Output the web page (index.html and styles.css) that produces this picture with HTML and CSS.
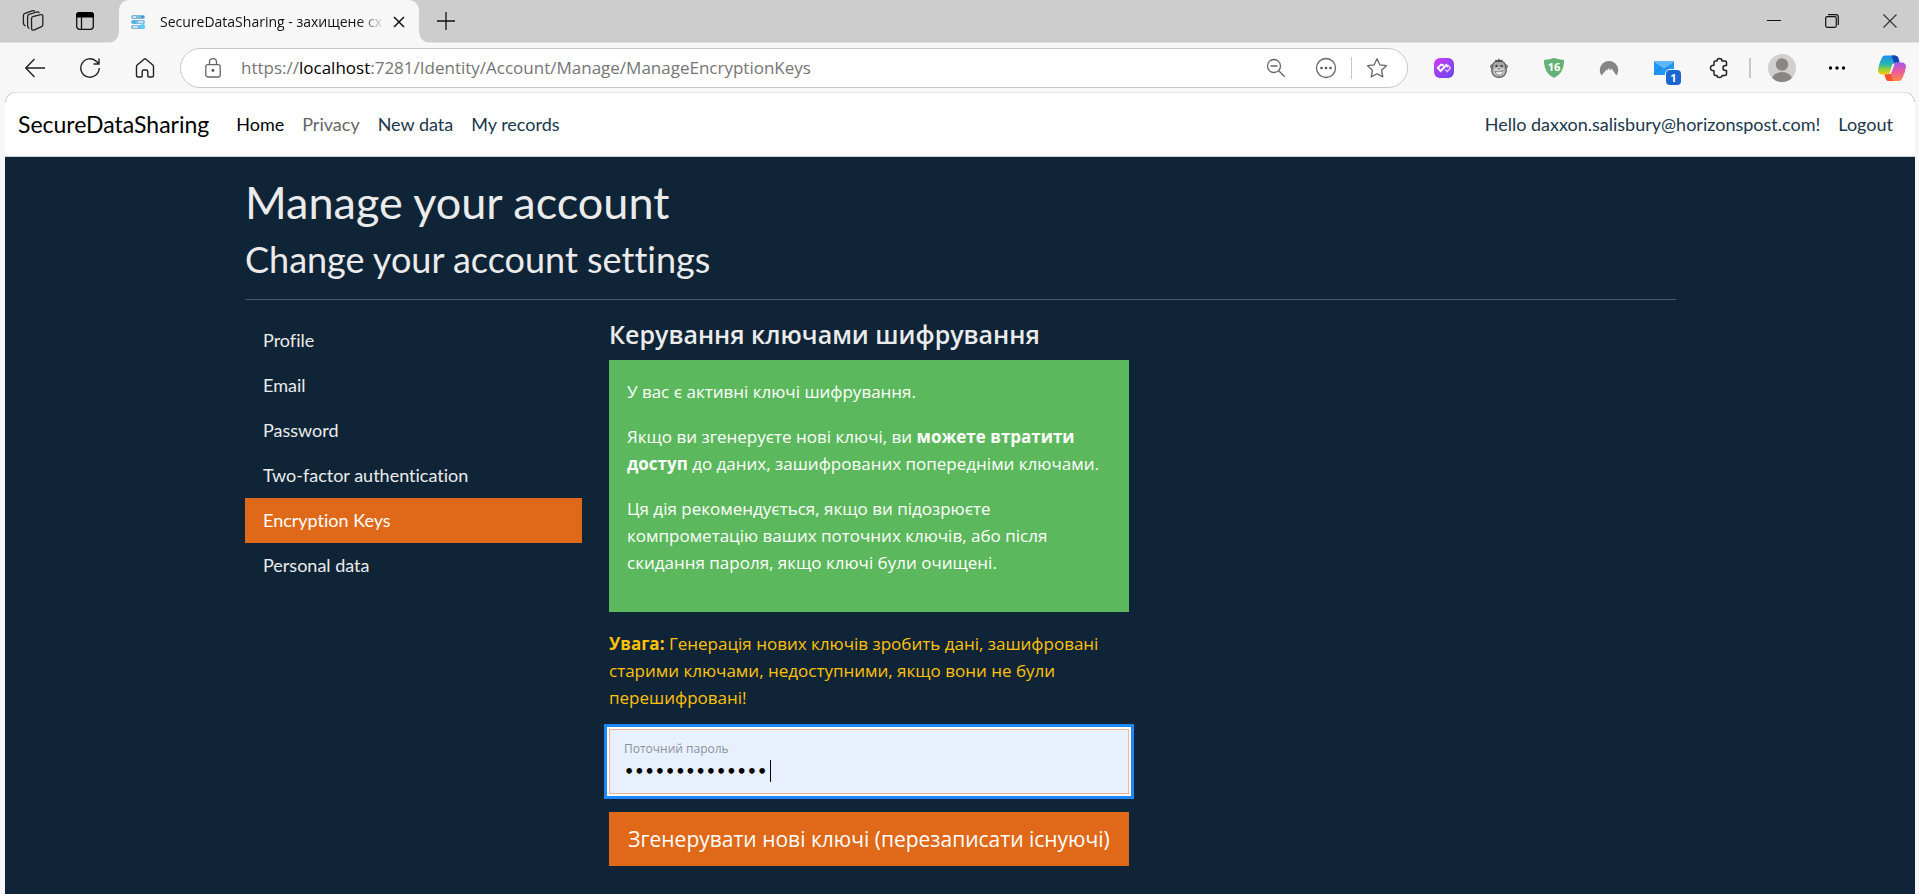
FILE: index.html
```html
<!DOCTYPE html>
<html lang="uk">
<head>
<meta charset="utf-8">
<title>SecureDataSharing - захищене сховище</title>
<link rel="stylesheet" href="styles.css">
</head>
<body>
<div class="browser">
  <div class="tabstrip">
    <button class="strip-btn first" aria-label="Workspaces"><svg width="22" height="22" viewBox="0 0 22 22"><g fill="none" stroke="#222" stroke-width="1.3" stroke-linejoin="round" stroke-linecap="round"><path d="M9.500 8.400Q9.500 7 10.800 6.600L18.600 4.600Q20.800 4.200 20.800 6.200V14.800Q20.800 16.200 19.600 16.600L12.400 19.800Q9.600 21 9.600 18.400Z"/><path d="M17 2.600Q16.400 1.600 14.800 2L7 4.400Q5.600 4.800 5.600 6.400V15.600Q5.600 17.400 7 18.200"/><path d="M12.600 1.200Q11.600.4 10 .9L3 3.400Q1.400 4 1.400 5.600V13Q1.400 14.800 3 15.600"/></g></svg></button>
    <button class="strip-btn" aria-label="Tab actions"><svg width="20" height="20" viewBox="0 0 20 20"><rect x="1.700" y="1.700" width="16.600" height="16.600" rx="3" fill="none" stroke="#111" stroke-width="1.300"/><path d="M1 6.500V4a3 3 0 0 1 3-3h12a3 3 0 0 1 3 3v2.500z" fill="#000"/><path d="M6.500 6v12" stroke="#111" stroke-width="1.300"/></svg></button>
    <div class="tab">
      <svg class="favicon" width="16" height="16" viewBox="0 0 16 16"><g fill="#7fb6de"><rect x="1" y="1" width="14" height="4" rx="2"/><rect x="1" y="6" width="14" height="4" rx="2"/><rect x="1" y="11" width="14" height="4" rx="2"/></g><path d="M3 3h3M8 8h5M3 13h5" stroke="#e8f6ff" stroke-width="1.300"/><circle cx="4" cy="8" r="1.500" fill="#21b8ef"/><circle cx="12.500" cy="12.500" r="2.500" fill="#5bcdf7"/><circle cx="12.500" cy="3" r="1" fill="#27799f"/></svg>
      <span class="tab-title">SecureDataSharing - захищене сх</span>
      <button class="tab-close" aria-label="Close tab"><svg width="12" height="12" viewBox="0 0 12 12"><path d="M1 1l10 10M11 1L1 11" stroke="#111" stroke-width="1.500"/></svg></button>
    </div>
    <button class="new-tab" aria-label="New tab"><svg width="18" height="18" viewBox="0 0 18 18"><path d="M9 0v18M0 9h18" stroke="#111" stroke-width="1.300"/></svg></button>
    <div class="window-controls">
      <button aria-label="Minimize"><svg width="14" height="14" viewBox="0 0 14 14"><path d="M0 6.500h14" stroke="#111"/></svg></button>
      <button aria-label="Restore"><svg width="14" height="14" viewBox="0 0 14 14" fill="none" stroke="#111" stroke-width="1.200"><rect x=".7" y="2.700" width="10.600" height="10.600" rx="1.500"/><path d="M3 .7h8q2.300 0 2.300 2.300v8"/></svg></button>
      <button aria-label="Close"><svg width="14" height="14" viewBox="0 0 14 14"><path d="M.5.5l13 13M13.500.5l-13 13" stroke="#333" stroke-width="1.200"/></svg></button>
    </div>
  </div>

  <div class="toolbar">
    <div class="tool-group">
      <button aria-label="Back"><svg width="20" height="20" viewBox="0 0 20 20"><path d="M20 10H1M9.500 1L.8 10l8.700 9" fill="none" stroke="#222" stroke-width="1.400"/></svg></button>
      <button aria-label="Refresh"><svg width="22" height="22" viewBox="0 0 22 22"><path d="M20.200 11A9.200 9.200 0 1 1 17.600 4.600L20 7M20 1.500V7h-5.500" fill="none" stroke="#222" stroke-width="1.400"/></svg></button>
      <button aria-label="Home"><svg width="20" height="22" viewBox="0 0 20 22"><path d="M1.500 9.500Q1.500 8.600 2.200 8L9 2.200q1-.8 2 0L17.800 8q.7.6.7 1.500V18.500q0 1.500-1.500 1.500H13.800q-1 0-1-1V14.500q0-1.500-1.500-1.500H8.700q-1.500 0-1.500 1.500V19q0 1-1 1H3q-1.500 0-1.500-1.500z" fill="none" stroke="#222" stroke-width="1.400"/></svg></button>
    </div>
    <div class="address">
      <svg width="16" height="20" viewBox="0 0 16 20"><g fill="none" stroke="#666" stroke-width="1.300"><rect x=".8" y="6.700" width="14.400" height="12.300" rx="2"/><path d="M4.500 6.500V4q0-3.300 3.500-3.300T11.500 4v2.500"/></g><circle cx="8" cy="12.500" r="1.400" fill="#555"/></svg>
      <div class="url">https://<span class="host">localhost</span>:7281/Identity/Account/Manage/ManageEncryptionKeys</div>
      <button aria-label="Zoom"><svg width="20" height="20" viewBox="0 0 20 20"><g fill="none" stroke="#666" stroke-width="1.300"><circle cx="8" cy="8" r="6.500"/><path d="M12.700 12.700l6 6M4.500 8h7"/></g></svg></button>
      <button aria-label="More"><svg width="22" height="22" viewBox="0 0 22 22"><circle cx="11" cy="11" r="9.500" fill="none" stroke="#666" stroke-width="1.300"/><g fill="#555"><circle cx="6.500" cy="11" r="1.300"/><circle cx="11" cy="11" r="1.300"/><circle cx="15.500" cy="11" r="1.300"/></g></svg></button>
      <span class="divider"></span>
      <button aria-label="Favorite"><svg width="22" height="22" viewBox="0 0 22 22"><path d="M11 1.800l2.800 6 6.600.9-4.800 4.600 1.200 6.600L11 16.700l-5.800 3.200 1.200-6.600L1.600 8.700l6.600-.9z" fill="none" stroke="#666" stroke-width="1.300" stroke-linejoin="round"/></svg></button>
    </div>
    <div class="tool-group">
      <button aria-label="Extension"><svg width="20" height="20" viewBox="0 0 20 20"><defs><linearGradient id="pu" x1="0" y1="0" x2="1" y2="1"><stop offset="0" stop-color="#cf3bf6"/><stop offset="1" stop-color="#6547ef"/></linearGradient></defs><rect width="20" height="20" rx="6" fill="url(#pu)"/><path d="M9.800 7.500L7.200 6.500 3.800 9.700 6.600 13l5.800-6 1.800 2" fill="none" stroke="#fff" stroke-width="1.900"/><path d="M14 7l2.300 3-3 3.500-2-2" fill="none" stroke="#d9b8fb" stroke-width="1.700"/></svg></button>
      <button aria-label="Monkey extension"><svg width="18" height="20" viewBox="0 0 18 20"><g fill="#a8a8a8" stroke="#5a5a5a"><circle cx="2.200" cy="8.500" r="1.700"/><circle cx="15.800" cy="8.500" r="1.700"/><path d="M2.500 8.500Q2.500 3 9 3t6.500 5.500Q16.500 11 16.200 13.500 15 19.300 9 19.300T1.800 13.500Q1.500 11 2.500 8.500z" stroke-width="1.200"/></g><path d="M5 4l.5-2.500L7.500 2.500 9 .3l1 2.200 2.500-1L12.500 4z" fill="#4a4a4a"/><ellipse cx="9" cy="13.500" rx="5.500" ry="4.500" fill="#cfcfcf"/><circle cx="6.500" cy="8" r="1.200" fill="#444"/><circle cx="11.500" cy="8" r="1.200" fill="#444"/><path d="M5 13.500q4 1.500 8-1-.3 4.300-3.800 4.500T5 13.500z" fill="#fff" stroke="#666" stroke-width=".8"/><path d="M8 10.800h2" stroke="#555"/></svg></button>
      <button aria-label="Blocker, 16"><svg width="20" height="20" viewBox="0 0 20 20"><path d="M0 2Q5 1.500 10 0q5 1.500 10 2 .5 13-10 18Q-.5 15 0 2z" fill="#65b277"/><text x="10" y="13" text-anchor="middle" class="shield-num">16</text></svg></button>
      <button aria-label="VPN"><svg width="20" height="16" viewBox="0 0 20 16"><path d="M2.500 15.500A9.200 9.200 0 1 1 17.500 15.500L12.500 8.500 11 10.500 10 8 8 10.500 7.500 9.500z" fill="#858585"/></svg></button>
      <button class="mail" aria-label="Mail, 1 new"><svg width="20" height="14" viewBox="0 0 20 14"><rect width="20" height="14" rx="1" fill="#2196f3"/><path d="M0 1q0-1 1-1h18q1 0 1 1L10 7.500z" fill="#64b7f7"/><path d="M0 14l7.500-8M20 14l-7.500-8" stroke="#1382dd"/></svg><span class="badge">1</span></button>
      <button aria-label="Extensions"><svg width="20" height="22" viewBox="0 0 20 22"><path d="M5 5.300Q5 4 6.300 4H8q0-2.500 2.500-2.500T13 4h3q1.500 0 1.500 1.500V8.500h-1q-2.500 0-2.500 2.500t2.500 2.500h1v3.500q0 1.500-1.500 1.500h-3q0 2-2.500 2T8 18.500H6.500Q5 18.500 5 17v-3.200Q1.500 14 1.500 11T5 8.200z" fill="none" stroke="#222" stroke-width="1.500" stroke-linejoin="round"/></svg></button>
    </div>
    <span class="divider bar"></span>
    <div class="tool-group">
      <button aria-label="Profile"><svg width="28" height="28" viewBox="0 0 28 28"><defs><clipPath id="av"><circle cx="14" cy="14" r="14"/></clipPath></defs><g clip-path="url(#av)"><rect width="28" height="28" fill="#d2d0ce"/><circle cx="14" cy="10.500" r="6.200" fill="#8a8684"/><ellipse cx="14" cy="25.500" rx="10" ry="7.500" fill="#8a8684"/></g></svg></button>
      <button aria-label="Settings"><svg width="18" height="4" viewBox="0 0 18 4"><circle cx="2.500" cy="2" r="1.700"/><circle cx="9" cy="2" r="1.700"/><circle cx="15.500" cy="2" r="1.700"/></svg></button>
      <button aria-label="Copilot"><svg width="28" height="28" viewBox="0 0 28 28"><defs><linearGradient id="c1" x1="0" y1="0" x2="0" y2="1"><stop offset="0" stop-color="#1b8df0"/><stop offset=".45" stop-color="#26b5b4"/><stop offset=".75" stop-color="#9fce35"/><stop offset="1" stop-color="#ffc400"/></linearGradient><linearGradient id="c2" x1="0" y1="0" x2="0" y2="1"><stop offset="0" stop-color="#a455ee"/><stop offset=".5" stop-color="#ee5b9b"/><stop offset="1" stop-color="#ff8a45"/></linearGradient></defs><path d="M7 1.500h10q2.500 0 3.300 2.500l1.300 4.500h-3.500q-2.500 0-3.300 2.500l-2.500 7.500q-.8 2-3 2H4.500Q0 20.500 0 15.500 1 9 4 3.500 5 1.500 7 1.500z" fill="url(#c1)"/><path d="M13.500 1.500H17q2.500 0 3.300 2.500l1.300 4.500h-3.500l-2 .6z" fill="#1742b8"/><path d="M21 27H11q-2.500 0-3.300-2.500L6.500 20.500h3q2.500 0 3.300-2.500l2.600-7.500q.8-2 3-2h5Q28 8.500 28 13q-1 6-4 12-1 2-3 2z" fill="url(#c2)"/><path d="M6.500 20.500h3q2 0 3-1.500l2.500 8h-4q-2.500 0-3.300-2.500z" fill="#f4502c"/><path d="M16.500 10.500l-3.800 9.500h-1.500l3.500-10z" fill="#fff"/></svg></button>
    </div>
  </div>

  <div class="page">
    <header class="navbar">
      <a class="brand" href="#">SecureDataSharing</a>
      <nav class="links">
        <a class="current" href="#">Home</a>
        <a class="muted" href="#">Privacy</a>
        <a href="#">New data</a>
        <a href="#">My records</a>
      </nav>
      <nav class="links account">
        <a href="#">Hello daxxon.salisbury@horizonspost.com!</a>
        <button>Logout</button>
      </nav>
    </header>
    <main class="container">
      <h1>Manage your account</h1>
      <h2>Change your account settings</h2>
      <hr>
      <div class="columns">
        <nav class="side">
          <a href="#">Profile</a>
          <a href="#">Email</a>
          <a href="#">Password</a>
          <a href="#">Two-factor authentication</a>
          <a class="active" href="#">Encryption Keys</a>
          <a href="#">Personal data</a>
        </nav>
        <section class="keys">
          <h3>Керування ключами шифрування</h3>
          <div class="alert">
            <p>У вас є активні ключі шифрування.</p>
            <p>Якщо ви згенеруєте нові ключі, ви <strong>можете втратити доступ</strong> до даних, зашифрованих попередніми ключами.</p>
            <p>Ця дія рекомендується, якщо ви підозрюєте компрометацію ваших поточних ключів, або після скидання пароля, якщо ключі були очищені.</p>
          </div>
          <p class="warning"><strong>Увага:</strong> Генерація нових ключів зробить дані, зашифровані старими ключами, недоступними, якщо вони не були перешифровані!</p>
          <form>
            <div class="field">
              <label for="password">Поточний пароль</label>
              <input id="password" type="password" value="12345678901234">
              <span class="caret"></span>
            </div>
            <button class="submit" type="button">Згенерувати нові ключі (перезаписати існуючі)</button>
          </form>
        </section>
      </div>
    </main>
  </div>
</div>
</body>
</html>
```
FILE: styles.css
```css
* { box-sizing: border-box; }
body { margin: 0; background: #f7f7f7; font-family: Lato, "Liberation Sans", sans-serif; font-size: 18px; line-height: 27px; font-variant-ligatures: none; }
button { border: 0; padding: 0; background: none; font: inherit; color: inherit; display: flex; align-items: center; justify-content: center; }
a { color: inherit; text-decoration: none; }
svg { display: block; flex: none; }

.browser { min-height: 100vh; display: flex; flex-direction: column; }

.tabstrip { height: 43px; background: #cdcdcd; border-bottom: 1px solid #e2e2e2; display: flex; align-items: stretch; }
.strip-btn { width: 52px; padding-bottom: 1px; }
.strip-btn.first { margin-left: 7px; }
.tab { position: relative; width: 300px; height: 43px; margin-left: 8px; padding: 0 14px 0 11px; background: #f7f7f7; border-radius: 10px 10px 0 0; display: flex; align-items: center; font-family: "Open Sans", sans-serif; font-size: 14px; color: #111; }
.tab::before, .tab::after { content: ""; position: absolute; bottom: 0; width: 10px; height: 10px; }
.tab::before { left: -10px; background: radial-gradient(circle at 0 0, #cdcdcd 9px, #f7f7f7 10px); }
.tab::after { right: -10px; background: radial-gradient(circle at 100% 0, #cdcdcd 9px, #f7f7f7 10px); }
.tab-title { flex: 1; margin: 0 8px 0 14px; overflow: hidden; white-space: nowrap; -webkit-mask-image: linear-gradient(90deg, #000 88%, transparent); mask-image: linear-gradient(90deg, #000 88%, transparent); }
.new-tab { width: 54px; padding-bottom: 1px; }
.window-controls { margin-left: auto; display: flex; }
.window-controls button { width: 58px; }

.toolbar { height: 49px; display: flex; align-items: center; padding-left: 7px; }
.tool-group { display: flex; align-items: center; }
.tool-group button { width: 55px; height: 40px; position: relative; }
.address { flex: 1; height: 40px; margin: 0 8px; padding: 0 5px 0 24px; display: flex; align-items: center; background: #fff; border: 1px solid #c9c9c9; border-radius: 20px; }
.address button { width: 50px; height: 36px; }
.url { flex: 1; margin-left: 20px; font-family: "Open Sans", sans-serif; font-size: 17px; color: #757575; }
.host { color: #000; }
.divider { width: 1px; height: 22px; background: #c8c8c8; }
.divider.bar { width: 2px; height: 20px; margin: 0 3px; }
.shield-num { font: bold 11px "Open Sans", sans-serif; fill: #fff; }
.badge { position: absolute; left: 30px; top: 22px; width: 15px; height: 15px; border-radius: 4px; background: #1a66d3; color: #fff; font: bold 11px/15px "Open Sans", sans-serif; box-shadow: 0 0 0 1px #f7f7f7; }

.page { flex: 1; margin: 0 4px 0 5px; background: #0f2537; border-radius: 12px 12px 0 0; overflow: hidden; color: #ebebeb; }
.navbar { min-height: 65px; padding: 0 22px 0 13px; display: flex; align-items: center; background: #fff; border-bottom: 1px solid #ced4da; box-shadow: inset 0 1px #e6e6e6; color: #20374c; }
.brand { font-size: 23px; color: #000; margin-right: 18px; }
.links { display: flex; }
.links > * { padding: 9px; }
.links .current { color: #000; }
.links .muted { color: #666; }
.account { margin-left: auto; }
.account > :last-child { padding-right: 0; }

.container { max-width: 1458px; margin: 0 auto; padding: 18px 13px 18px 14px; }
h1, h2, h3 { margin: 0 0 9px; font-weight: 400; }
h1 { font-size: 45px; line-height: 54px; }
h2 { font-size: 36px; line-height: 43px; }
hr { margin: 18px 0; border: 0; border-top: 1px solid #465766; }
.columns { display: flex; gap: 27px; }
.side { flex: 0 0 337px; }
.side a { display: block; padding: 9px 18px; }
.side .active { background: #df6919; color: #fff; }
.keys { width: 520px; font-family: "Open Sans", sans-serif; font-size: 17px; }
h3 { font-size: 25px; line-height: 33px; font-weight: 600; }
p { margin: 0 0 18px; }
.alert { padding: 18px; margin-bottom: 18px; background: #5cb85c; color: #fff; }
.warning { color: #ffc107; }
.field { position: relative; height: 65px; margin-bottom: 18px; background: #e8f0fe; border: 1px solid #efb48c; outline: 3px solid #1f87fc; outline-offset: 2px; box-shadow: 0 0 0 2px #fff; }
.field label { position: absolute; left: 14px; top: 8px; font-size: 12px; line-height: 22px; color: #8a929c; }
.field input { width: 100%; height: 63px; padding: 24px 14px 4px; border: 0; background: none; outline: 0; color: #000; font-family: "DejaVu Sans", sans-serif; font-size: 16px; font-weight: 700; }
.caret { position: absolute; left: 160px; top: 30px; width: 1px; height: 22px; background: #000; }
.submit { width: 100%; height: 54px; background: #df6919; color: #fff; font-size: 21px; }
```
